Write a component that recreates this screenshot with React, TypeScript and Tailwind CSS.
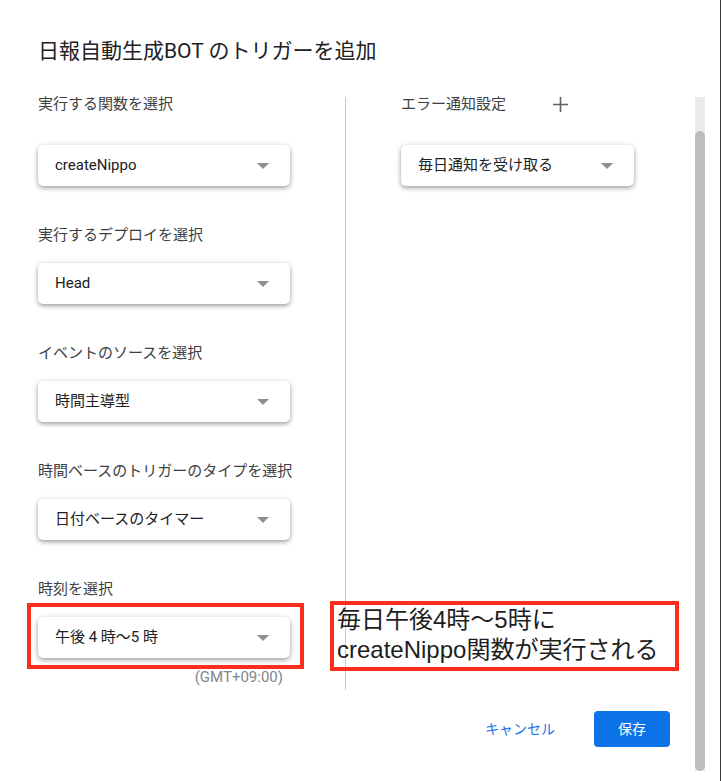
import { Fragment } from 'react';

const FONT = 'font-["Roboto","Noto_Sans_CJK_JP",sans-serif]';

type Field = { label: string; value: string };

const LEFT_FIELDS: Field[] = [
  { label: '実行する関数を選択', value: 'createNippo' },
  { label: '実行するデプロイを選択', value: 'Head' },
  { label: 'イベントのソースを選択', value: '時間主導型' },
  { label: '時間ベースのトリガーのタイプを選択', value: '日付ベースのタイマー' },
  { label: '時刻を選択', value: '午後 4 時〜5 時' },
];

function Caret() {
  return (
    <svg width="12" height="6" viewBox="0 0 12 6" className="shrink-0">
      <path d="M0 0h12L6 6z" fill="#8f8f8f" />
    </svg>
  );
}

function Select({ value, width }: { value: string; width: string }) {
  return (
    <div
      className={`flex h-[41px] items-center justify-between rounded-[5px] bg-white pl-[17px] pr-[21px] text-[15px] text-[#202124] shadow-[0_2px_4px_rgba(0,0,0,0.3),0_1px_7px_rgba(0,0,0,0.12)] ${width}`}
    >
      <span>{value}</span>
      <Caret />
    </div>
  );
}

function Label({ children }: { children: string }) {
  return (
    <div className="h-[20px] whitespace-nowrap text-[15px] leading-[20px] text-[#3c4043]">{children}</div>
  );
}

export default function App() {
  return (
    <div className={`relative h-[781px] w-[721px] overflow-hidden bg-white ${FONT}`}>
      <div className="pl-[38px] pt-[39px] text-[21px] leading-[24px] text-[#202124]">
        日報自動生成BOT のトリガーを追加
      </div>

      <div className="mt-[31px] flex h-[596px]">
        <div className="ml-[38px] flex w-[252px] flex-col">
          {LEFT_FIELDS.map((f, i) => (
            <Fragment key={f.label}>
              <div className={i === 0 ? '' : 'mt-[39px]'}>
                <Label>{f.label}</Label>
              </div>
              <div className={i === 0 ? 'mt-[31px]' : 'mt-[18px]'}>
                <Select value={f.value} width="w-[252px]" />
              </div>
            </Fragment>
          ))}
          <div className="mt-[10px] pr-[7px] text-right text-[15px] leading-[18px] text-[#80868b]">
            (GMT+09:00)
          </div>
        </div>

        <div className="ml-[55px] mt-[3px] h-[593px] w-px bg-[#c8c8c8]" />

        <div className="ml-[55px] flex flex-col">
          <div className="flex items-center">
            <Label>エラー通知設定</Label>
            <svg width="15" height="15" viewBox="0 0 15 15" className="ml-[47px]">
              <path d="M7.5 0v15M0 7.5h15" stroke="#5f6368" strokeWidth="1.6" />
            </svg>
          </div>
          <div className="mt-[31px]">
            <Select value="毎日通知を受け取る" width="w-[233px]" />
          </div>
        </div>
      </div>

      <div className="mt-[21px] flex items-center justify-end pr-[51px]">
        <button className="h-[36px] px-[8px] text-[14px] text-[#1a73e8]">キャンセル</button>
        <button className="ml-[31px] h-[36px] w-[76px] rounded-[4px] bg-[#0b72e7] text-[14px] text-white">
          保存
        </button>
      </div>

      {/* scrollbar */}
      <div className="absolute left-[695px] top-[97px] flex h-[674px] w-[10px] flex-col bg-[#ebebeb]">
        <div className="mt-[34px] flex-1 rounded-full bg-[#bdbdbd]" />
      </div>
      <div className="absolute right-0 top-0 h-full w-px bg-[#3a3a3a]" />

      {/* annotations */}
      <div className="absolute left-[27px] top-[603px] h-[66px] w-[277px] border-[4px] border-[#ff2d1f]" />
      <div className="absolute left-[330px] top-[601px] h-[70px] w-[349px] whitespace-nowrap border-[4px] border-[#ff2d1f] pl-[3px] font-['Liberation_Sans','Noto_Sans_CJK_JP',sans-serif] text-[24px] leading-[30px] text-[#1e1e1e]">
        毎日午後4時〜5時に
        <br />
        createNippo関数が実行される
      </div>
    </div>
  );
}
